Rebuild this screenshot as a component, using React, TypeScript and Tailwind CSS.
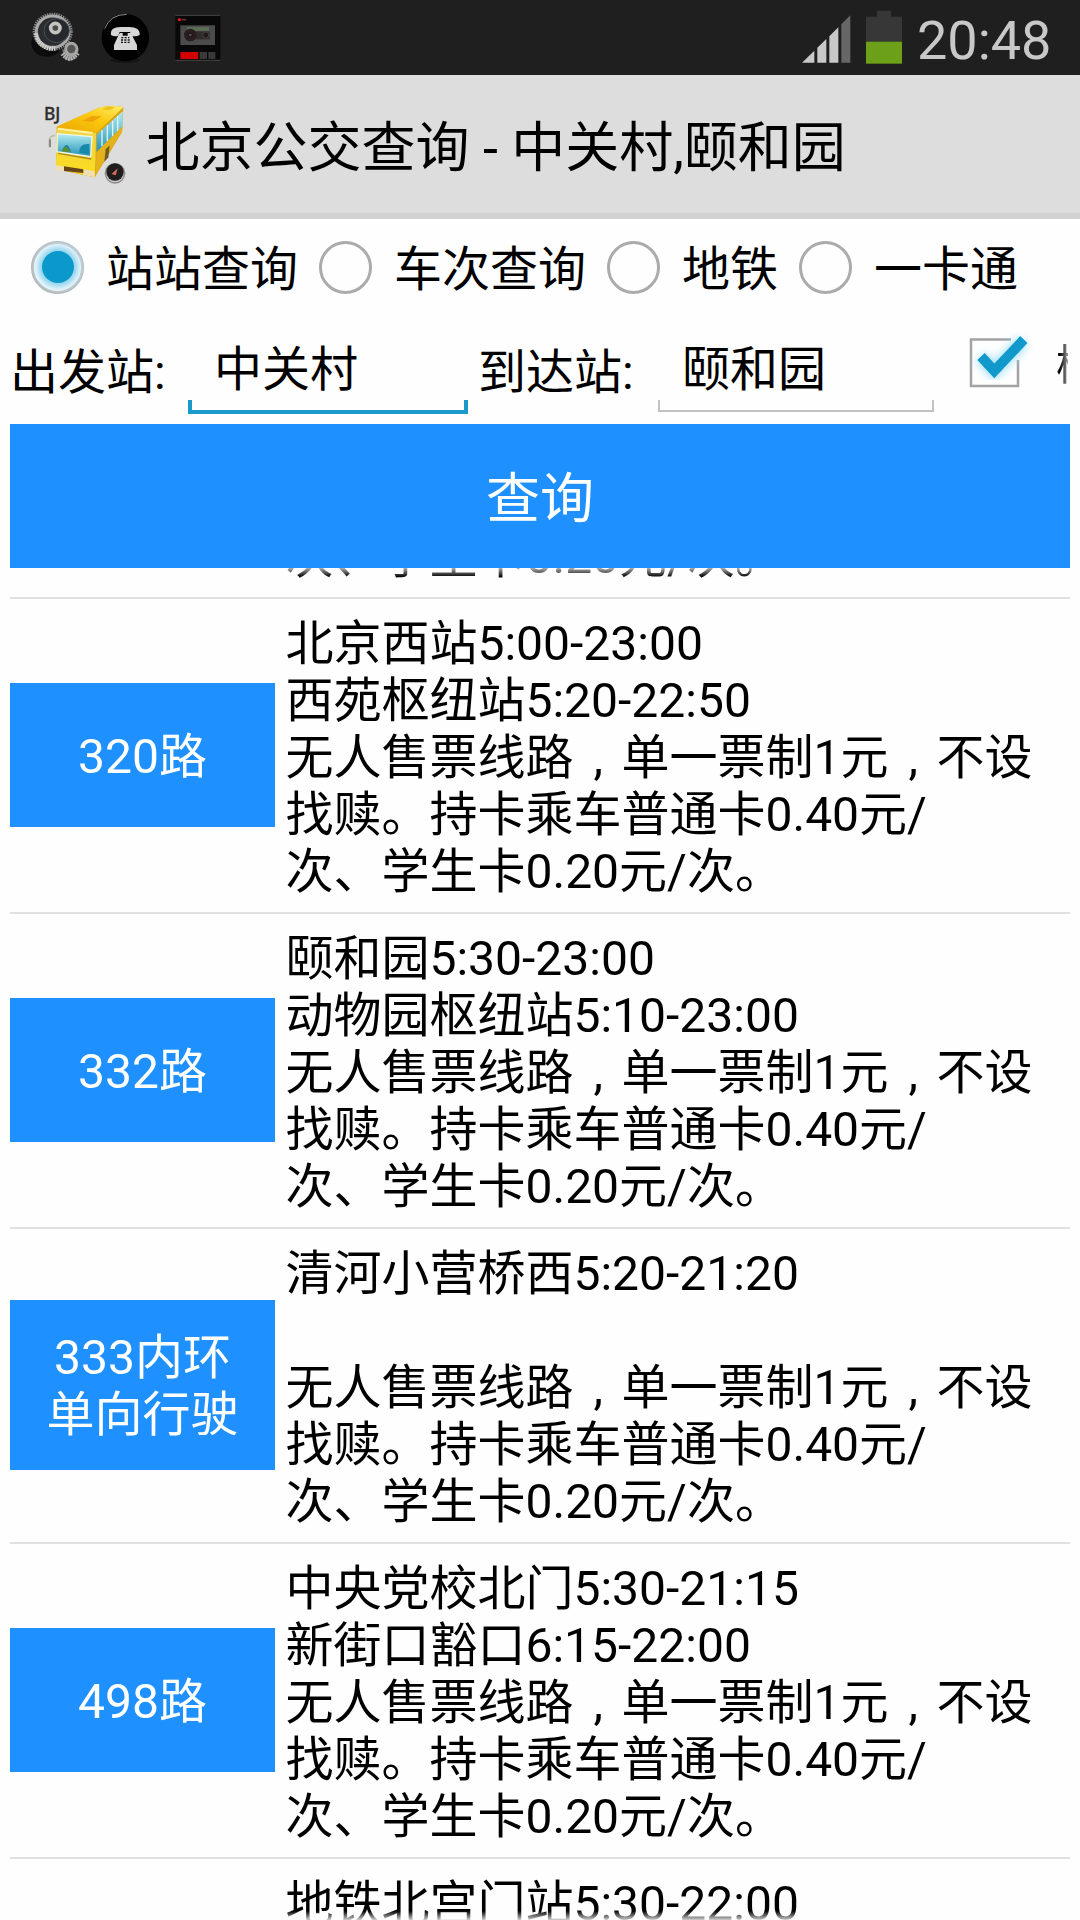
import React, { useState } from 'react';

interface RouteInfo {
  name: string[];
  lines: string[];
}

const FARE = ['无人售票线路,单一票制1元,不设', '找赎。持卡乘车普通卡0.40元/', '次、学生卡0.20元/次。'];

const ROUTES: RouteInfo[] = [
  { name: ['320路'], lines: ['北京西站5:00-23:00', '西苑枢纽站5:20-22:50', ...FARE] },
  { name: ['332路'], lines: ['颐和园5:30-23:00', '动物园枢纽站5:10-23:00', ...FARE] },
  { name: ['333内环', '单向行驶'], lines: ['清河小营桥西5:20-21:20', '', ...FARE] },
  { name: ['498路'], lines: ['中央党校北门5:30-21:15', '新街口豁口6:15-22:00', ...FARE] },
];

const MODES = ['站站查询', '车次查询', '地铁', '一卡通'];

const GearIcon = () => (
  <svg className="h-[56px] w-[50px]" viewBox="90 30 150 168">
    <ellipse cx="140" cy="130" rx="46" ry="40" fill="#0c0c0c" />
    <ellipse cx="158" cy="95" rx="56" ry="53" fill="none" stroke="#8d8d8d" strokeWidth="8" strokeDasharray="4 3" />
    <ellipse cx="158" cy="95" rx="49" ry="47" fill="#2a2d30" stroke="#a9a9a7" strokeWidth="9" />
    <path d="M108 100a50 50 0 0 0 60 45" fill="none" stroke="#cfcfcc" strokeWidth="13" strokeDasharray="5 2" />
    <ellipse cx="170" cy="92" rx="38" ry="36" fill="#25292d" stroke="#4b4f53" strokeWidth="3" />
    <circle cx="166" cy="84" r="14" fill="#4a4a4a" stroke="#c3c3c0" strokeWidth="11" />
    <path d="M187 148l4 27q18 16 36 0l8-24z" fill="#777" />
    <path d="M189 160q20 28 43-2" fill="none" stroke="#bbb" strokeWidth="17" strokeDasharray="4 3" />
    <circle cx="214" cy="147" r="17" fill="#555" stroke="#a5a5a3" strokeWidth="9" />
  </svg>
);

const PhoneIcon = () => (
  <svg className="h-[56px] w-[50px]" viewBox="300 30 150 168">
    <ellipse cx="375" cy="180" rx="44" ry="9" fill="#141414" />
    <circle cx="376" cy="113" r="71" fill="#020202" />
    <path d="M314 86q16-42 66-43" fill="none" stroke="#8a8a8a" strokeWidth="3" />
    <path
      d="M333 105q-4-24 30-24h24q34 0 32 24-12 6-25 2l-4-11h-31l-5 11q-10 4-21-2zM356 104l4-5h8v8h15v-8h8l6 9 14 27v15h-69v-15z"
      fill="#d6d6d6"
    />
    <path d="M364 113h24M363 120h26M363 127h27" stroke="#111" strokeWidth="4" strokeDasharray="6 4" />
  </svg>
);

const CassetteIcon = () => (
  <svg className="h-[48px] w-[46px]" viewBox="524 42 138 144">
    <rect x="525" y="45" width="135" height="137" fill="#080808" />
    <path d="M525 46h135M525 181h135" stroke="#484848" strokeWidth="3" />
    <circle cx="537" cy="59" r="5" fill="#c42020" />
    <path d="M543 59h15" stroke="#7a2525" strokeWidth="5" />
    <rect x="540" y="76" width="104" height="59" fill="#4a4b4a" />
    <rect x="560" y="81" width="66" height="13" fill="#5a6c55" />
    <rect x="562" y="94" width="66" height="24" fill="#302c2c" />
    <circle cx="570" cy="105" r="13" fill="#171313" stroke="#2b1c1d" strokeWidth="12" />
    <circle cx="570" cy="105" r="4" fill="#555" />
    <circle cx="616" cy="105" r="9" fill="#1b1b1b" stroke="#4b4141" strokeWidth="3" />
    <rect x="540" y="156" width="54" height="21" fill="#d30000" />
    <rect x="598" y="156" width="22" height="21" fill="#393939" />
    <rect x="624" y="156" width="21" height="21" fill="#393939" />
  </svg>
);

const SignalIcon = () => (
  <svg className="h-[48px] w-[49px]" viewBox="65 46 147 144">
    <path d="M65 189L102 153V189zM111 189V144L138 118V189zM147 189V110L174 83V189z" fill="#c8c8c8" />
    <path d="M183 189V74L210 47V189z" fill="#676767" />
  </svg>
);

const BatteryIcon = () => (
  <svg className="h-[54px] w-[36px]" viewBox="258 31 108 162">
    <path d="M258 51H291V33H333V51H366V126H258z" fill="#373737" />
    <rect x="258" y="126" width="108" height="66" fill="#6ca018" />
  </svg>
);

const BusIcon = () => (
  <svg className="h-[85px] w-[88px]" viewBox="120 90 264 255">
    <defs>
      <linearGradient id="roof" x1="0" y1="1" x2="1" y2="0">
        <stop offset="0" stopColor="#e9a500" />
        <stop offset="0.55" stopColor="#fbc70c" />
        <stop offset="1" stopColor="#ffee6a" />
      </linearGradient>
      <linearGradient id="glass" x1="0" y1="0" x2="0" y2="1">
        <stop offset="0" stopColor="#b5edf5" />
        <stop offset="1" stopColor="#2492b5" />
      </linearGradient>
      <linearGradient id="front" x1="0" y1="0" x2="0" y2="1">
        <stop offset="0" stopColor="#f1d44a" />
        <stop offset="1" stopColor="#fcdc1c" />
      </linearGradient>
    </defs>
    <text
      x="132"
      y="144"
      fontSize="54"
      fontWeight="500"
      textLength="49"
      lengthAdjust="spacingAndGlyphs"
      fill="#2c2c2c"
      stroke="#2c2c2c"
      fontFamily="Noto Sans, sans-serif"
    >
      BJ
    </text>
    <path d="M148 225v-24q2-9 18-11" fill="none" stroke="#c4bfa8" strokeWidth="5" />
    <path d="M150 202v24" stroke="#8a8a84" strokeWidth="6" />
    <path d="M170 165L300 106Q340 98 370 106L366 180 328 244 284 316 168 292z" fill="#d9a514" />
    <path d="M172 163L300 106Q340 97 370 106L288 184 172 173z" fill="url(#roof)" />
    <path d="M246 146l30-14 29 1-28 17z" fill="#efa30a" />
    <path d="M304 112l20-9 22 2-16 10z" fill="#ecc323" />
    <path d="M290 188L368 118V162L290 240z" fill="url(#glass)" />
    <path d="M306 174v49M322 160v47M338 146v47M353 132v46" stroke="#e0f4ec" strokeWidth="4" />
    <path d="M290 240L368 163 366 180 318 252 286 314z" fill="#e4b21a" />
    <path d="M317 232l12-12-4 36-12 14z" fill="#6d5b28" />
    <path d="M170 168L288 184 286 270 284 315 168 290z" fill="url(#front)" />
    <path d="M174 170L278 183" stroke="#fff2a0" strokeWidth="6" />
    <path d="M172 185L276 194 272 254 171 239z" fill="url(#glass)" stroke="#eff7e6" strokeWidth="4" />
    <path d="M186 236q14-34 26 0l0 4zM238 242q-2-28 30-26l0 30z" fill="#1688a8" />
    <path d="M184 238l14-16 14 18z" fill="#5f8d2b" />
    <path d="M174 244L274 261" stroke="#a78b21" strokeWidth="4" />
    <path d="M168 279L194 284V299L168 293zM250 292L284 298V315L250 309z" fill="#efdfb2" />
    <path d="M192 283L250 292V303L192 297z" fill="#66451a" />
    <circle cx="345" cy="304" r="31" fill="#8c8989" />
    <circle cx="345" cy="304" r="27" fill="#c9c7c7" />
    <circle cx="345" cy="300" r="26" fill="#211d1d" />
    <path d="M335 306l18-17-6 21z" fill="#d96d61" />
  </svg>
);

const CheckIcon = () => (
  <svg className="h-[60px] w-[68px] shrink-0" viewBox="0 0 68 60">
    <defs>
      <filter id="glow" x="-30%" y="-30%" width="160%" height="160%">
        <feGaussianBlur stdDeviation="4" />
      </filter>
    </defs>
    <path d="M45 10.500H5V57H52V31" fill="none" stroke="#a3a3a3" strokeWidth="2.500" />
    <path d="M15 28L28 42L57 12" fill="none" stroke="#9fe0f8" strokeWidth="13" filter="url(#glow)" />
    <path d="M15 27.500L28.300 42L57.800 10.500" fill="none" stroke="#1299cc" strokeWidth="10" />
  </svg>
);

// full-width commas sit in the middle of their cell
const renderLine = (line: string) =>
  line.split(',').map((part, index) => (
    <React.Fragment key={index}>
      {index > 0 && <span className="inline-block w-12 indent-[20px]">,</span>}
      {part}
    </React.Fragment>
  ));

const StationInput: React.FC<{ value: string; focused?: boolean }> = ({ value, focused = false }) => (
  <div className={focused ? 'flex h-[90px] w-[280px] shrink-0 flex-col' : 'flex h-[90px] w-[276px] shrink-0 flex-col'}>
    <div className={focused ? 'h-[76px] pl-[26px] leading-[92px]' : 'h-[76px] pl-[24px] leading-[92px]'}>{value}</div>
    <div
      className={
        focused
          ? 'h-[14px] border-x-4 border-b-4 border-[#1a9acb]'
          : 'h-[12px] border-x-2 border-b-2 border-[#c1c1c1]'
      }
    />
  </div>
);

const RouteRow: React.FC<{ route: RouteInfo }> = ({ route }) => (
  <div className="flex h-[315px] shrink-0 items-center border-b-2 border-[#e1e1e1]">
    <button
      type="button"
      className="mb-px flex min-h-[144px] w-[265px] shrink-0 flex-col items-center justify-center bg-[#1e90ff] pt-[29px] pb-[27px] leading-[57px] text-white"
    >
      {route.name.map((part) => (
        <span key={part}>{part}</span>
      ))}
    </button>
    <div className="pt-1 pl-[10.5px] leading-[57px] whitespace-nowrap">
      {route.lines.map((line, index) => (
        <p key={index} className="h-[57px]">
          {renderLine(line)}
        </p>
      ))}
    </div>
  </div>
);

const App: React.FC = () => {
  const [mode, setMode] = useState(0);

  return (
    <div className="flex h-[1920px] w-[1080px] flex-col overflow-hidden bg-[#fefefe] font-['Roboto','Noto_Sans_CJK_SC',sans-serif] text-[48px] text-black">
      {/* 状态栏 */}
      <div className="flex h-[75px] shrink-0 items-start bg-[#1f1f1f]">
        <div className="flex gap-5 pt-[10px] pl-[30px]">
          <GearIcon />
          <PhoneIcon />
          <div className="pt-1 pl-[5px]">
            <CassetteIcon />
          </div>
        </div>
        <div className="ml-auto flex pr-[44px]">
          <div className="pt-[15px]">
            <SignalIcon />
          </div>
          <div className="pt-[10px] pl-[15px]">
            <BatteryIcon />
          </div>
          <span className="w-[134px] pt-[9px] pl-[15px] text-[54px] leading-[64px] whitespace-nowrap text-[#c8c8c8]">20:48</span>
        </div>
      </div>

      {/* 标题栏 */}
      <header className="flex h-[144px] shrink-0 items-center border-b-[6px] border-[#d1d1d1] bg-[#dddddd] pl-10">
        <BusIcon />
        <h1 className="pt-[9px] pl-[17.5px] text-[54px] leading-[64px] whitespace-pre">北京公交查询 - 中关村,颐和园</h1>
      </header>

      <div className="flex h-24 shrink-0 pl-[11px]">
        {MODES.map((label, index) => (
          <button key={label} type="button" onClick={() => setMode(index)} className="flex items-center">
            <span className="flex w-[95px] pl-5">
              <span className="flex size-[53px] items-center justify-center rounded-full border-[3px] border-[#ababab]">
                {mode === index && (
                  <span className="size-8 rounded-full bg-[#0b99cc] shadow-[0_0_6px_3px_#7fcdea,0_0_6px_8px_#e0f3fb]" />
                )}
              </span>
            </span>
            <span className="pt-1 pr-px leading-[57px] whitespace-nowrap">{label}</span>
          </button>
        ))}
      </div>

      <div className="mx-[10px] flex h-[109px] shrink-0 overflow-hidden pt-[9px] whitespace-nowrap">
        <span className="w-[178px] shrink-0 leading-[97px]">出发站:</span>
        <StationInput value="中关村" focused />
        <span className="w-[190px] shrink-0 pl-[10px] leading-[97px]">到达站:</span>
        <StationInput value="颐和园" />
        <div className="pt-[5px] pl-[32px]">
          <CheckIcon />
        </div>
        <span className="w-[34px] shrink-0 overflow-hidden bg-gradient-to-r from-black from-70% to-neutral-400 to-100% bg-clip-text pl-[22px] text-[42px] leading-[84px] text-transparent">
          模糊
        </span>
      </div>

      <button type="button" className="mx-[10px] h-36 shrink-0 bg-[#1e90ff] pt-1.5 text-[54px] text-white">
        查询
      </button>

      <div className="mx-[10px] flex h-[1352px] flex-col overflow-hidden mask-[linear-gradient(to_bottom,transparent_-4px,black_9px,black_1343px,transparent_1354px)]">
        <div className="flex h-[31px] shrink-0 flex-col justify-end border-b-2 border-[#e1e1e1] pb-[12px] pl-[275.5px] leading-[57px]">
          <p>{FARE[2]}</p>
        </div>
        {ROUTES.map((route) => (
          <RouteRow key={route.name[0]} route={route} />
        ))}
        <p className="pt-[16px] pl-[275.5px] leading-[57px]">地铁北宫门站5:30-22:00</p>
      </div>
    </div>
  );
};

export default App;
